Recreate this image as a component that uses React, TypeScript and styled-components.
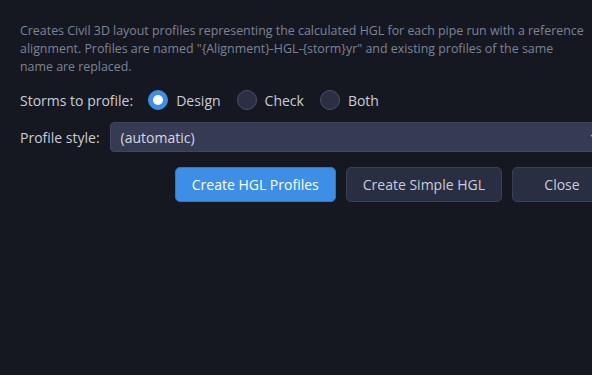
import { useState } from "react";
import styled, { createGlobalStyle } from "styled-components";

const GlobalStyle = createGlobalStyle`
  html, body {
    margin: 0;
    padding: 0;
    background: #151821;
    overflow: hidden;
  }
  body {
    font-family: "Open Sans", "Noto Sans", "Liberation Sans", sans-serif;
  }
`;

type Storm = "design" | "check" | "both";

const STORMS: { id: Storm; label: string }[] = [
  { id: "design", label: "Design" },
  { id: "check", label: "Check" },
  { id: "both", label: "Both" },
];

const DESCRIPTION = [
  "Creates Civil 3D layout profiles representing the calculated HGL for each pipe run with a reference",
  'alignment. Profiles are named "{Alignment}-HGL-{storm}yr" and existing profiles of the same',
  "name are replaced.",
];

function App() {
  const [storm, setStorm] = useState<Storm>("design");

  return (
    <>
      <GlobalStyle />
      <Panel>
        <Description>
          {DESCRIPTION.map((line) => (
            <Line key={line}>{line}</Line>
          ))}
        </Description>

        <Row>
          <Label>Storms to profile:</Label>
          <RadioGroup>
            {STORMS.map((s) => (
              <RadioOption key={s.id} onClick={() => setStorm(s.id)}>
                <RadioDot $checked={storm === s.id} />
                <OptionText>{s.label}</OptionText>
              </RadioOption>
            ))}
          </RadioGroup>
        </Row>

        <SelectRow>
          <Label>Profile style:</Label>
          <Select>
            <SelectValue>(automatic)</SelectValue>
            <Chevron viewBox="0 0 10 6" width="10" height="6">
              <path d="M1 1l4 4 4-4" fill="none" stroke="#9aa0b4" strokeWidth="1.3" />
            </Chevron>
          </Select>
        </SelectRow>

        <Actions>
          <Button $primary>Create HGL Profiles</Button>
          <Button>Create Simple HGL</Button>
          <CloseButton>Close</CloseButton>
        </Actions>
      </Panel>
    </>
  );
}

const Panel = styled.div`
  width: 632px;
  box-sizing: border-box;
  padding: 22px 20px 0 20px;
  display: flex;
  flex-direction: column;
`;

const Description = styled.div`
  font-size: 12.4px;
  line-height: 18px;
  color: #7d8397;
`;

const Line = styled.div`
  white-space: nowrap;
`;

const Row = styled.div`
  display: flex;
  align-items: center;
  height: 20px;
  margin-top: 14px;
`;

const Label = styled.span`
  font-size: 14px;
  color: #c9cdd9;
  white-space: nowrap;
`;

const RadioGroup = styled.div`
  display: flex;
  align-items: center;
  gap: 16px;
  margin-left: 15px;
`;

const RadioOption = styled.label`
  display: flex;
  align-items: center;
  gap: 8px;
  cursor: pointer;
`;

const RadioDot = styled.span<{ $checked: boolean }>`
  width: 20px;
  height: 20px;
  box-sizing: border-box;
  border-radius: 50%;
  display: inline-flex;
  align-items: center;
  justify-content: center;
  background: ${(p) => (p.$checked ? "#3c8fe4" : "#2b2f45")};
  border: 1px solid ${(p) => (p.$checked ? "#3c8fe4" : "#4a4f68")};

  &::after {
    content: "";
    display: ${(p) => (p.$checked ? "block" : "none")};
    width: 10px;
    height: 10px;
    border-radius: 50%;
    background: #ffffff;
  }
`;

const OptionText = styled.span`
  font-size: 14px;
  color: #c9cdd9;
`;

const SelectRow = styled(Row)`
  height: 30px;
  margin-top: 12px;
  gap: 10px;
`;

const Select = styled.div`
  flex: 1;
  height: 30px;
  box-sizing: border-box;
  display: flex;
  align-items: center;
  justify-content: space-between;
  padding: 0 11px 0 10px;
  background: #363a52;
  border: 1px solid #41465e;
  border-radius: 4px;
`;

const SelectValue = styled.span`
  font-size: 14px;
  color: #d4d7e2;
`;

const Chevron = styled.svg`
  flex-shrink: 0;
`;

const Actions = styled.div`
  display: flex;
  justify-content: flex-end;
  gap: 10px;
  margin-top: 15px;
`;

const Button = styled.button<{ $primary?: boolean }>`
  height: 35px;
  padding: 0 16px;
  border-radius: 5px;
  font-family: inherit;
  font-size: 14px;
  cursor: pointer;
  color: ${(p) => (p.$primary ? "#ffffff" : "#c9cdd9")};
  background: ${(p) => (p.$primary ? "#3c8fe4" : "#2a2e43")};
  border: 1px solid ${(p) => (p.$primary ? "#2f78c9" : "#3a3f56")};
`;

const CloseButton = styled(Button)`
  min-width: 100px;
`;

export default App;
